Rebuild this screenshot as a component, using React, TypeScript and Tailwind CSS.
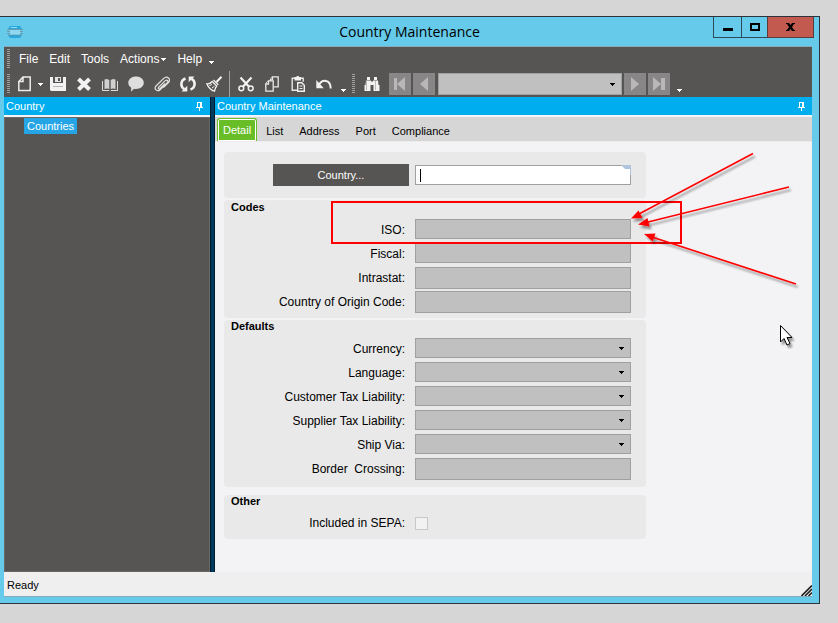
import React, { useState } from 'react';

const menus = ["File", "Edit", "Tools", "Actions", "Help"];
const tabs = ["Detail", "List", "Address", "Port", "Compliance"];

const codeFields = [
    { id: "iso", label: "ISO:", tall: false },
    { id: "fiscal", label: "Fiscal:", tall: false },
    { id: "intrastat", label: "Intrastat:", tall: true },
    { id: "origin", label: "Country of Origin Code:", tall: true }
];
const defaultFields = [
    { id: "currency", label: "Currency:" },
    { id: "language", label: "Language:" },
    { id: "customerTax", label: "Customer Tax Liability:" },
    { id: "supplierTax", label: "Supplier Tax Liability:" },
    { id: "shipVia", label: "Ship Via:" }
];

const icons: any = {
    save: (
        <g>
            <path d="M0 1h16v14H1l-1-1z" fill="#f2f2f2" />
            <path d="M3 1h10v6H3z" fill="#575553" />
            <path d="M5 1h6v5H5z" fill="#e4e4e4" />
            <path d="M8 2h2v3H8z" fill="#575553" />
            <path d="M3 10h10v1H3z" fill="#b5b3b1" />
        </g>
    ),
    remove: <path d="M2.5 3l11 10.5M13.5 3l-11 10.5" stroke="#f2f2f2" strokeWidth="4" />,
    book: (
        <g>
            <path d="M2.500 3.500L5 3l2.300 1v9L5 12.500l-2.500.5zM13.500 3.500L11 3 8.700 4v9l2.300-.5 2.500.5z" fill="#d0d0d0" />
            <path d="M.5 5v9.500h6.700M15.500 5v9.500H8.800" fill="none" stroke="#dedede" />
        </g>
    ),
    comment: <path d="M8 .5c4.400 0 7.800 2.700 7.800 6.300S12.400 13 8 13c-.7 0-1.400 0-2-.2L3 15.800l.3-4C1.500 10.800.3 9 .3 6.800.3 3.200 3.600.5 8 .5z" fill="#dedede" />,
    clip: <path d="M4.500 11.500l6.800-6.800c1.600-1.600 3.600.4 2 2l-7.200 7C3.300 16.300-.7 12.800 2 10l7.700-7.600c3.300-3.300 7.800.7 4.700 4.200l-5 5M4.500 11.500c-.8 1 .5 2 1.400 1.200l5-5" fill="none" stroke="#e2e2e2" strokeWidth="1.200" />,
    refresh: (
        <g>
            <path d="M5.500 2.500C.2 4.500.2 11 4.500 13.200M10.500 13.500c5.300-2 5.300-8.500 1-10.700" fill="none" stroke="#f2f2f2" strokeWidth="2.600" />
            <path d="M1.500 15.500h5.800V9.800zM14.500.5H8.700v5.700z" fill="#f2f2f2" />
        </g>
    ),
    broom: (
        <g>
            <path d="M15.500.8L10.500 6" stroke="#f2f2f2" strokeWidth="2" />
            <path d="M7.500 4l4.800 4.800M.8 7.800c2.500.5 4.200-.8 5.400-2.300l4.500 4.500c-1.500 1.500-1.700 3-2.200 5.200C5.500 14.500 2 11 .8 7.800z" fill="none" stroke="#f2f2f2" strokeWidth="1.300" />
            <path d="M3.500 9.500l2.500-1M6 12l2.500-1.800" stroke="#f2f2f2" />
        </g>
    ),
    cut: (
        <g fill="none" stroke="#f2f2f2">
            <path d="M2.500 1.500l8.800 9.500M13.500 1.500l-8.800 9.500" strokeWidth="2.200" />
            <circle cx="3.300" cy="12.300" r="2.400" strokeWidth="1.500" />
            <circle cx="12.700" cy="12.300" r="2.400" strokeWidth="1.500" />
        </g>
    ),
    copy: (
        <g fill="#575553" stroke="#e8e8e8" strokeWidth="1.300">
            <path d="M8.500.8h5.700v10H6.500V3.500z" />
            <path d="M8.500.8v3h-2" />
            <path d="M4.500 4.800h4.700v10.400H1.800V7.800z" />
            <path d="M4.500 4.800v3.200H1.800" />
        </g>
    ),
    paste: (
        <g>
            <path d="M8 14.300H2.200V2.200h11v3.500" fill="none" stroke="#e8e8e8" strokeWidth="1.400" />
            <path d="M4.500 1h1.800C6.500-.2 9-.2 9.200 1H11v3.500H4.500z" fill="#f2f2f2" />
            <path d="M7.700 6.700h4l2.600 2.600v6H7.700z" fill="#575553" stroke="#f2f2f2" strokeWidth="1.400" />
            <path d="M9.500 10h3M9.500 12.500h3" stroke="#f2f2f2" />
        </g>
    ),
    undo: (
        <g>
            <path d="M3 8.800C6 3.500 14.500 2.500 14.700 12.500" fill="none" stroke="#f2f2f2" strokeWidth="2" />
            <path d="M.3 4v8.300h7.500z" fill="#f2f2f2" />
        </g>
    ),
    find: (
        <g fill="#f2f2f2">
            <path d="M3 1h3v3H3zM10 1h3v3h-3zM2 4.500h5V9H1.500zM9 4.500h5l.5 4.500H9zM7 5.500h2V9H7zM.5 9h6v6h-6zM9.500 9h6v6h-6z" />
            <path d="M2.500 5v9M11.500 5v9" stroke="#bdbbb9" />
        </g>
    )
};

function Caret({ className = "" }: any) {
    return (
        <svg width="5" height="3" viewBox="0 0 5 3" className={`pointer-events-none shrink-0 ${className}`} shapeRendering="crispEdges">
            <path d="M0 0h5v1H4v1H3v1H2V2H1V1H0z" fill="currentColor" />
        </svg>
    );
}

function Grip() {
    return (
        <svg width="3" height="20" viewBox="0 0 3 20" className="shrink-0" shapeRendering="crispEdges">
            <path d="M1.500 0v20" stroke="#a3a19f" strokeWidth="3" strokeDasharray="1 1" />
        </svg>
    );
}

function ToolButton({ name, label }: any) {
    return (
        <button aria-label={label} className="flex w-[26px] shrink-0 items-center justify-center">
            <svg width="16" height="16" viewBox="0 0 16 16">{icons[name]}</svg>
        </button>
    );
}

function NavButton({ d, label }: any) {
    return (
        <button aria-label={label} className="flex h-[22px] w-[22px] shrink-0 items-center justify-center bg-[#888686]">
            <svg width="14" height="14" viewBox="0 0 14 14"><path d={d} fill="#b9b7b7" /></svg>
        </button>
    );
}

function Pin() {
    return (
        <svg width="7" height="9" viewBox="0 0 7 9" shapeRendering="crispEdges">
            <path d="M1 0h5v5h1v1H4v3H3V6H0V5h1zM2 1v4h2V1z" fill="#fff" fillRule="evenodd" />
        </svg>
    );
}

function PaneHeader({ title }: any) {
    return (
        <div className="flex h-5 items-center justify-between border-b-2 border-[#f4f4f4] bg-[#00aef0] pr-[7px] pl-[2px] text-[11px] text-white">
            <span>{title}</span>
            <button aria-label={`Pin ${title}`}><Pin /></button>
        </div>
    );
}

function Group({ title, className = "", children }: any) {
    return (
        <section className={`w-full max-w-[422px] rounded-[4px] bg-[#e9e9e9] ${className}`}>
            {title && <h2 className="h-[18px] px-[7px] text-[11px] leading-[13px] font-bold">{title}</h2>}
            {children}
        </section>
    );
}

function Row({ id, label, children }: any) {
    return (
        <div className="grid h-6 grid-cols-[191px_216px]">
            <label htmlFor={id} className="pr-[10px] text-right leading-[22px] whitespace-pre">{label}</label>
            <div className="relative">{children}</div>
        </div>
    );
}

export default function App() {
    const [tab, setTab] = useState("Detail");
    const [country, setCountry] = useState("");

    return (
        <div className="flex min-h-screen flex-col bg-[#d6d6d6] pt-4 pr-[18px] pb-[19px] font-['Liberation_Sans',Arial,sans-serif] text-xs text-black">
            <div className="flex flex-1 flex-col border-t border-r border-b border-[#2d3338] bg-[#66caea]">
                <header className="grid h-[29px] grid-cols-[1fr_auto_1fr]">
                    <div className="flex items-center pl-[7px]">
                        <svg width="16" height="12" viewBox="0 0 16 12">
                            <path d="M3 0h10l2 3H1zM1 9h14l-2 3H3z" fill="#2aa7dc" />
                            <path d="M4 1h6v1H4z" fill="#8de0f7" />
                            <path d="M0 3.500h16M0 5.500h3M0 7.500h3M13 5.500h3M13 7.500h3M1 9h14" stroke="#6b8fa0" strokeWidth="0.800" />
                            <path d="M3 4h10v4.500H3z" fill="#8fd8ef" />
                        </svg>
                    </div>
                    <h1 className="font-['Open_Sans','Noto_Sans',sans-serif] text-sm leading-[29px]">Country Maintenance</h1>
                    <div className="mr-[5px] flex h-[21px] justify-end">
                        <button aria-label="Minimize" className="flex w-7 items-center justify-center border-b border-l border-[#2d4a57] pt-1">
                            <span className="h-[3px] w-[10px] bg-black"></span>
                        </button>
                        <button aria-label="Maximize" className="flex w-[26px] items-center justify-center border-b border-l border-[#2d4a57]">
                            <span className="h-2 w-[10px] border-2 border-black"></span>
                        </button>
                        <button aria-label="Close" className="flex w-[47px] items-center justify-center border-r border-b border-l border-[#5d3a3c] bg-[#c35a50]">
                            <svg width="9" height="8" viewBox="0 0 9 8"><path d="M0 0h3l1.500 2L6 0h3v1H8L6 4l2 3h1v1H6L4.500 6 3 8H0V7h1l2-3-2-3H0z" /></svg>
                        </button>
                    </div>
                </header>

                <div className="mr-[7px] mb-[6px] ml-1 flex flex-1 flex-col border-t border-b border-[#87a9b8] bg-[#efefef]">
                    <div className="bg-[#575553] text-white">
                        <nav className="flex h-6 items-center pl-[3px]">
                            <Grip />
                            <div className="flex gap-[11px] pl-[9px]">
                                {menus.map((item: any) => (
                                    <button key={item} className="flex items-center gap-[2px]">
                                        {item}
                                        {item === "Actions" && <Caret />}
                                    </button>
                                ))}
                            </div>
                            <Caret className="mt-[6px] ml-[7px]" />
                        </nav>
                        <div className="flex h-[26px] items-center pl-[3px]">
                            <Grip />
                            <button aria-label="New" className="ml-[7px] flex items-center gap-[5px]">
                                <svg width="16" height="16" viewBox="0 0 16 16">
                                    <path d="M6 1h7.200v13.500H1.800V5.500zM6 1v4.500H1.800" fill="none" stroke="#ececec" strokeWidth="1.500" />
                                </svg>
                                <Caret />
                            </button>
                            <div className="ml-[2px] flex">
                                <ToolButton name="save" label="Save" />
                                <ToolButton name="remove" label="Delete" />
                                <ToolButton name="book" label="Book" />
                                <ToolButton name="comment" label="Comment" />
                                <ToolButton name="clip" label="Attach" />
                                <ToolButton name="refresh" label="Refresh" />
                                <ToolButton name="broom" label="Clear" />
                            </div>
                            <span className="ml-[2px] h-full w-px bg-[#a3a19f]"></span>
                            <div className="ml-[3px] flex">
                                <ToolButton name="cut" label="Cut" />
                                <ToolButton name="copy" label="Copy" />
                                <ToolButton name="paste" label="Paste" />
                                <ToolButton name="undo" label="Undo" />
                            </div>
                            <Caret className="mt-[13px] ml-1" />
                            <span className="ml-[6px] flex"><Grip /></span>
                            <span className="ml-1 flex"><ToolButton name="find" label="Find" /></span>
                            <div className="ml-1 flex min-w-0 items-center gap-[2px]">
                                <NavButton label="First" d="M1 1h3v12H1zM12 0v14L4 7z" />
                                <NavButton label="Previous" d="M11 0v14L3 7z" />
                                <div className="relative ml-px">
                                    <select aria-label="Record" className="block h-[22px] w-[184px] appearance-none border border-[#a0a0a0] bg-[#c0c0c0] text-black">
                                        <option></option>
                                    </select>
                                    <Caret className="absolute top-[10px] right-[7px] text-black" />
                                </div>
                                <NavButton label="Next" d="M3 0v14l8-7z" />
                                <NavButton label="Last" d="M1 0v14l8-7zM9 1h4v12h-4z" />
                            </div>
                            <Caret className="mt-[13px] ml-[7px]" />
                        </div>
                    </div>

                    <div className="flex flex-1">
                        <aside className="flex w-[206px] shrink-0 flex-col bg-[#575553]">
                            <PaneHeader title="Country" />
                            <ul className="flex-1 border border-[#6a6866] pl-[19px] text-[11px] text-white">
                                <li><button className="h-4 bg-[#25a5e6] px-[3px] leading-4">Countries</button></li>
                            </ul>
                        </aside>
                        <div className="w-[5px] shrink-0 border-r border-l border-[#001c2e] bg-[#003a5c]"></div>

                        <main className="flex min-w-0 flex-1 flex-col bg-[#f3f3f5]">
                            <PaneHeader title="Country Maintenance" />
                            <div role="tablist" className="flex h-6 bg-[#d6d6d6] pt-px pl-[2px] text-[11px]">
                                {tabs.map((item: any) => (
                                    <button
                                        key={item}
                                        role="tab"
                                        aria-selected={tab === item}
                                        onClick={() => setTab(item)}
                                        className={tab === item
                                            ? "mr-px rounded-t-[3px] border-x border-t border-[#69be28] bg-[#69be28] px-[5px] text-white inset-ring inset-ring-white"
                                            : "px-2 pt-[3px]"}
                                    >
                                        {item}
                                    </button>
                                ))}
                            </div>
                            <form className="relative flex flex-1 flex-col border-t border-[#ececee] pt-[10px] pb-8 pl-[9px]">
                                <Group className="mb-[2px] py-3">
                                    <div className="grid grid-cols-[191px_216px] items-center">
                                        <button type="button" className="mr-[6px] ml-auto h-[22px] w-[136px] bg-[#575553] text-[11px] text-white">Country...</button>
                                        <div className="relative">
                                            <input
                                                aria-label="Country"
                                                value={country}
                                                onChange={(e: any) => setCountry(e.target.value)}
                                                className="block h-5 w-full border border-[#a0a0a0] bg-white px-1 outline-none"
                                            />
                                            <span className="pointer-events-none absolute top-1 left-[5px] h-[13px] w-px bg-black"></span>
                                            <svg width="10" height="10" viewBox="0 0 10 10" className="absolute top-0 right-0">
                                                <path d="M0 0h10v10H9V4H4z" fill="#b0c4de" />
                                            </svg>
                                        </div>
                                    </div>
                                </Group>
                                <Group title="Codes" className="mb-[2px] pt-px pb-[3px]">
                                    {codeFields.map((item: any) => (
                                        <Row key={item.id} id={item.id} label={item.label}>
                                            <input id={item.id} readOnly className={`block w-full border border-[#a0a0a0] bg-[#c0c0c0] px-1 ${item.tall ? 'h-[22px]' : 'h-5'}`} />
                                        </Row>
                                    ))}
                                </Group>
                                <Group title="Defaults" className="mb-2 pb-[5px]">
                                    {defaultFields.map((item: any) => (
                                        <Row key={item.id} id={item.id} label={item.label}>
                                            <select id={item.id} className="block h-5 w-full appearance-none border border-[#a0a0a0] bg-[#c0c0c0] px-1">
                                                <option></option>
                                            </select>
                                            <Caret className="absolute top-[9px] right-[7px]" />
                                        </Row>
                                    ))}
                                    <Row id="border" label="Border  Crossing:">
                                        <input id="border" readOnly className="block h-[22px] w-full border border-[#a0a0a0] bg-[#c0c0c0] px-1" />
                                    </Row>
                                </Group>
                                <Group title="Other" className="pb-[6px]">
                                    <div className="grid h-5 grid-cols-[191px_216px] items-center">
                                        <label htmlFor="sepa" className="pr-[10px] text-right leading-5">Included in SEPA:</label>
                                        <input id="sepa" type="checkbox" className="h-[13px] w-[13px] appearance-none border border-[#c8c8c8] bg-[#f2f2f2]" />
                                    </div>
                                </Group>

                                {/* callout box, arrows and mouse pointer drawn over the form */}
                                <svg width="597" height="240" viewBox="215 141 597 240" className="pointer-events-none absolute -top-px left-0">
                                    <defs>
                                        <filter id="soft" x="-20%" y="-20%" width="140%" height="140%">
                                            <feDropShadow dx="2" dy="3" stdDeviation="1.200" floodColor="#000" floodOpacity="0.4" />
                                        </filter>
                                    </defs>
                                    <rect x="332" y="202" width="349" height="41" fill="none" stroke="#f00" strokeWidth="2" />
                                    <g filter="url(#soft)" stroke="#f00" strokeWidth="1.600" fill="#f00">
                                        <path d="M753 153.500L638 214.500M789 187L646 222.500M796 284L652 237" />
                                        <path stroke="none" d="M631 218.500l7.500-8 4 7.500zM638 224.500l9.500-6.500 2 8.500zM644 234l11.500-.5-2.700 8z" />
                                    </g>
                                    <g filter="url(#soft)">
                                        <path d="M780.500 325.500v16.500l3.500-3.500 3 6.500 3-1.500-3-6h5z" fill="#fff" stroke="#000" />
                                    </g>
                                </svg>
                            </form>
                        </main>
                    </div>

                    <footer className="flex h-6 items-center justify-between pt-[2px] pl-[3px] text-[11px]">
                        <span>Ready</span>
                        <svg width="11" height="11" viewBox="0 0 11 11" className="self-end">
                            <path d="M0 11L11 0v11z" fill="#fff" />
                            <path d="M.5 11L11 .5M4 11l7-7M7.500 11L11 7.500" stroke="#222" strokeWidth="1.700" />
                        </svg>
                    </footer>
                </div>
            </div>
        </div>
    );
}
